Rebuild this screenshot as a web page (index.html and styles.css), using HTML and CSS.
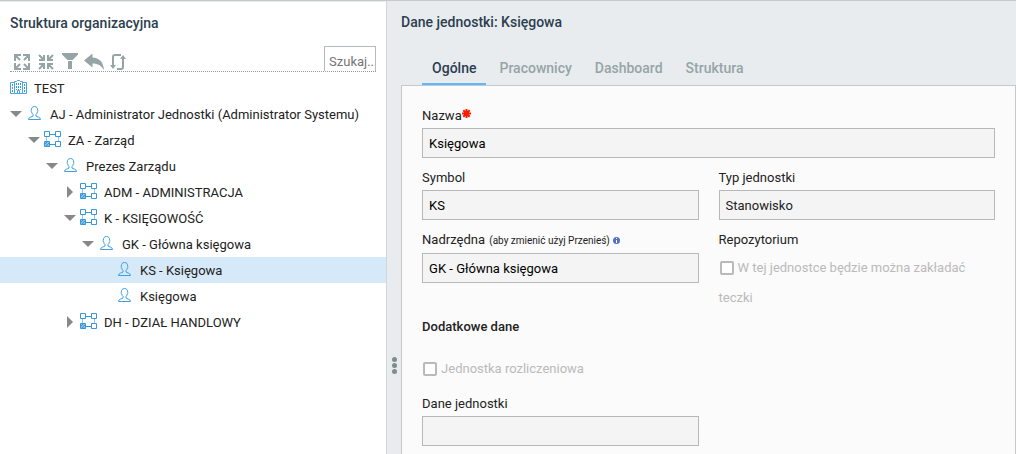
FILE: index.html
```
<!DOCTYPE html>
<html lang="pl">
<head>
  <meta charset="UTF-8" />
  <meta name="viewport" content="width=device-width, initial-scale=1" />
  <title>Struktura organizacyjna</title>
  <link rel="stylesheet" href="styles.css">
</head>
<body>
  <!-- Shared tree icons -->
  <svg class="sprite" aria-hidden="true">
    <symbol id="user" viewBox="0 0 17 18">
      <path d="M8.500 1.500C6.300 1.500 5.300 3 5.400 5C4.900 5.300 5.200 6.700 5.700 7C5.900 8.200 6.400 9 7 9.500V11C6.200 12 2.500 11.800 2.500 14.500H14.500C14.500 11.800 10.800 12 10 11V9.500C10.600 9 11.100 8.200 11.300 7C11.800 6.700 12.100 5.300 11.600 5C11.700 3 10.700 1.500 8.500 1.500Z" fill="none" stroke="#3f9fde"/>
    </symbol>
    <symbol id="unit" viewBox="0 0 17 18">
      <rect x="1" y="11" width="5" height="5" fill="#86bfe8"/>
      <path d="M1 13L3 11M1 16L6 11M4 16L6 14" stroke="#3498db"/>
      <path d="M.5 .5H5.500V5.500H.5ZM11.500 .5H16.500V5.500H11.500ZM.5 10.500H5.500V15.500H.5ZM11.500 10.500H16.500V15.500H11.500ZM5.500 3.500H11.500M5.500 13.500H11.500" fill="none" stroke="#3498db"/>
      <path d="M2.500 6V10M14.500 6V10" stroke="#9fc4ec"/>
    </symbol>
    <symbol id="company" viewBox="0 0 17 18">
      <path d="M4.500 14.500H.5V3.500H4.500M12.500 14.500H16.500V3.500H12.500M4.500 14.500V2.500H6.500L7.500 1.500H9.500L10.500 2.500H12.500V14.500ZM7.500 14V11.500H9.500V14" fill="none" stroke="#4aa5e2"/>
      <path d="M2.500 5V13M14.500 5V13M6.500 4V11M8.500 4V11M10.500 4V11" fill="none" stroke="#3498db" stroke-dasharray="2 1"/>
    </symbol>
  </svg>

  <div class="layout">
    <aside class="sidebar">
      <h2 class="title">Struktura organizacyjna</h2>
      <div class="toolbar">
        <button type="button" aria-label="Rozwiń">
          <svg viewBox="0 0 18 18"><path d="M2 8V2H8M2 2L7 7M10 2H16V8M16 2L11 7M2 10V16H8M2 16L7 11M10 16H16V10M16 16L11 11" fill="none" stroke="#95a5a6" stroke-width="2"/></svg>
        </button>
        <button type="button" aria-label="Zwiń">
          <svg viewBox="0 0 18 18"><path d="M2 7H7V2M7 7L2 2M11 2V7H16M11 7L16 2M2 11H7V16M7 11L2 16M11 16V11H16M11 11L16 16" fill="none" stroke="#95a5a6" stroke-width="2"/></svg>
        </button>
        <button type="button" aria-label="Filtruj">
          <svg viewBox="0 0 18 18"><path d="M1 0H17V1.500L11.500 7H6.500L1 1.500ZM7 8H11V16H7Z"/></svg>
        </button>
        <button type="button" aria-label="Cofnij">
          <svg class="wide" viewBox="0 0 20 18"><path d="M0 7.500L8.500 .5V4.500C15 4.800 19.500 9 20 17C17 12.500 14 10.600 8.500 10.500V14.500Z"/></svg>
        </button>
        <button type="button" aria-label="Odśwież">
          <svg viewBox="0 0 18 18"><path d="M12 2H6Q4 2 4 4V13M8 16H12Q14 16 14 14V6" fill="none" stroke="#95a5a6" stroke-width="2"/><path d="M1 12H7L4 16ZM11 6H17L14 2Z"/></svg>
        </button>
        <input class="search" type="text" placeholder="Szukaj..." aria-label="Szukaj">
      </div>

      <ul class="tree">
        <li><svg class="icon"><use href="#company"/></svg>TEST</li>
        <li><i class="caret open"></i><svg class="icon"><use href="#user"/></svg>AJ - Administrator Jednostki (Administrator Systemu)</li>
        <li class="level-1"><i class="caret open"></i><svg class="icon"><use href="#unit"/></svg>ZA - Zarząd</li>
        <li class="level-2"><i class="caret open"></i><svg class="icon"><use href="#user"/></svg>Prezes Zarządu</li>
        <li class="level-3"><i class="caret"></i><svg class="icon"><use href="#unit"/></svg>ADM - ADMINISTRACJA</li>
        <li class="level-3"><i class="caret open"></i><svg class="icon"><use href="#unit"/></svg>K - KSIĘGOWOŚĆ</li>
        <li class="level-4"><i class="caret open"></i><svg class="icon"><use href="#user"/></svg>GK - Główna księgowa</li>
        <li class="level-5 selected"><i class="caret none"></i><svg class="icon"><use href="#user"/></svg>KS - Księgowa</li>
        <li class="level-5"><i class="caret none"></i><svg class="icon"><use href="#user"/></svg>Księgowa</li>
        <li class="level-3"><i class="caret"></i><svg class="icon"><use href="#unit"/></svg>DH - DZIAŁ HANDLOWY</li>
      </ul>
    </aside>

    <div class="splitter"><span></span><span></span><span></span></div>

    <main class="details">
      <h1 class="title">Dane jednostki: Księgowa</h1>
      <nav class="tabs">
        <button type="button" class="active">Ogólne</button>
        <button type="button">Pracownicy</button>
        <button type="button">Dashboard</button>
        <button type="button">Struktura</button>
      </nav>

      <form class="panel">
        <div class="fields">
          <div class="field full">
            <label for="name">Nazwa<svg class="required" viewBox="0 0 9 9"><path d="M4.500 0V9M0 4.500H9M1.300 1.300L7.700 7.700M7.700 1.300L1.300 7.700" stroke="#ff1a00" stroke-width="2"/></svg></label>
            <input id="name" type="text" value="Księgowa" readonly>
          </div>
          <div class="field">
            <label for="symbol">Symbol</label>
            <input id="symbol" type="text" value="KS" readonly>
          </div>
          <div class="field">
            <label for="type">Typ jednostki</label>
            <select id="type"><option>Stanowisko</option></select>
          </div>
          <div class="field">
            <label for="parent">Nadrzędna <small>(aby zmienić użyj Przenieś)</small> <svg class="info" viewBox="0 0 7 7"><circle cx="3.500" cy="3.500" r="3.500" fill="#566fc9"/><path d="M3.500 1V2M3.500 3V6" stroke="#fff"/></svg></label>
            <input id="parent" type="text" value="GK - Główna księgowa" readonly>
          </div>
          <div class="field">
            <span class="caption">Repozytorium</span>
            <label class="check"><input type="checkbox" disabled>W tej jednostce będzie można zakładać teczki</label>
          </div>
        </div>

        <h3>Dodatkowe dane</h3>
        <div class="fields">
          <label class="check full"><input type="checkbox" disabled>Jednostka rozliczeniowa</label>
          <div class="field">
            <label for="data">Dane jednostki</label>
            <input id="data" type="text" readonly>
          </div>
        </div>
      </form>
    </main>
  </div>
</body>
</html>
```
FILE: styles.css
```
:root {
  --bg: #e8ecef;
  --heading: #2c3e50;
  --muted: #95a5a6;
  --line: #c5c9cc;
  --field-line: #b8b8b8;
  --disabled: #bababa;
  --blue: #63b6f7;
}

* {
  box-sizing: border-box;
}

body {
  margin: 0;
  font-family: Roboto, sans-serif;
  font-size: 13px;
  color: #222;
  background: var(--bg);
}

button, input, select {
  font: inherit;
  border-radius: 0;
}

.sprite {
  display: none;
}

.layout {
  display: flex;
  min-height: 100vh;
  border-top: 1px solid var(--line);
}

.title {
  margin: 0;
  font-size: 14px;
  font-weight: 500;
  line-height: 20px;
  color: var(--heading);
}

/* Left side */
.sidebar {
  flex: 0 0 38%;
  margin-top: 1px;
  padding-top: 11px;
  background: #fff;
}
.sidebar .title {
  padding-left: 10px;
}

.toolbar {
  display: flex;
  align-items: flex-start;
  gap: 6px;
  height: 26px;
  margin: 13px 10px 3px;
  padding-left: 3px;
  border-bottom: 1px dotted #999;
  overflow: hidden;
}
.toolbar button {
  width: 18px;
  height: 25px;
  padding: 7px 0 0;
  border: none;
  background: none;
  cursor: pointer;
}
.toolbar svg {
  display: block;
  width: 18px;
  height: 18px;
  fill: var(--muted);
}
.toolbar .wide {
  width: 20px;
  margin-left: -1px;
}

.search {
  width: 52px;
  height: 30px;
  margin-left: auto;
  padding: 0 0 0 4px;
  border: 1px solid #b5bcc0;
  background: #fff;
}
.search::placeholder {
  color: #757575;
}

.tree {
  margin: 0;
  padding: 0;
  list-style: none;
}
.tree li {
  display: flex;
  align-items: center;
  height: 26px;
  padding-left: 10px;
  white-space: nowrap;
}
.tree .level-1 { padding-left: 28px; }
.tree .level-2 { padding-left: 46px; }
.tree .level-3 { padding-left: 64px; }
.tree .level-4 { padding-left: 82px; }
.tree .level-5 { padding-left: 100px; }
.tree .selected {
  background: #d6e9f8;
}

.icon {
  width: 17px;
  height: 18px;
  margin-right: 7px;
}

.caret {
  width: 12px;
  height: 12px;
  margin-right: 4px;
  background: #888;
  clip-path: polygon(3px 0, 9px 6px, 3px 12px);
}
.caret.open {
  clip-path: polygon(0 3px, 12px 3px, 6px 9px);
}
.caret.none {
  visibility: hidden;
}

.splitter {
  display: flex;
  flex-direction: column;
  align-items: center;
  gap: 1px;
  width: 15px;
  padding-top: 356px;
  border-left: 1px solid #d3d6d8;
  cursor: col-resize;
}
.splitter span {
  width: 5px;
  height: 5px;
  border-radius: 50%;
  background: #7f8c8d;
}

/* Right side */
.details {
  flex: 1;
  display: flex;
  flex-direction: column;
  min-width: 0;
  padding-top: 11px;
}

.tabs {
  display: flex;
  gap: 3px;
  margin-top: 20px;
  padding-left: 21px;
}
.tabs button {
  height: 33px;
  padding: 0 10px;
  border: none;
  border-bottom: 2px solid transparent;
  background: none;
  font-size: 14px;
  font-weight: 500;
  color: var(--muted);
  cursor: pointer;
}
.tabs .active {
  color: var(--heading);
  border-color: var(--blue);
}

.panel {
  flex: 1;
  padding: 17px 20px 8px;
  border: 1px solid var(--line);
  border-bottom: none;
  background: #fbfbfb;
}

.fields {
  display: grid;
  grid-template-columns: 1fr 1fr;
  gap: 7px 20px;
}
.full {
  grid-column: 1 / -1;
}

.field label,
.caption {
  display: block;
  line-height: 25px;
}
.field small {
  margin-left: 1px;
  font-size: 10px;
}
.field input[type="text"],
.field select {
  display: block;
  width: 100%;
  height: 30px;
  padding: 0 6px;
  border: 1px solid var(--field-line);
  background: #f4f4f4;
  color: #000;
}
.field select {
  appearance: none;
  color: #222;
}

.required {
  width: 9px;
  height: 9px;
  vertical-align: 2px;
}
.info {
  width: 7px;
  height: 7px;
}

.panel .check {
  padding-top: 1px;
  line-height: 30px;
  color: var(--disabled);
}
.check input {
  appearance: none;
  width: 14px;
  height: 14px;
  margin: 0 4px 0 1px;
  border: 2px solid var(--disabled);
  border-radius: 2px;
  background: #fff;
  vertical-align: -3px;
}

h3 {
  margin: 1px 0 14px;
  font-size: 13px;
  font-weight: 500;
  line-height: 25px;
}
```
